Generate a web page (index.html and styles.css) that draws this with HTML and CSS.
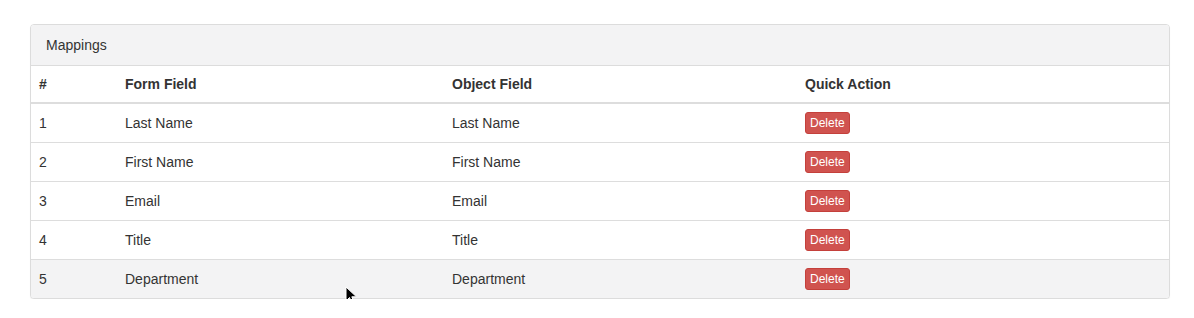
FILE: index.html
```html
<!DOCTYPE html>
<html>
<head>
<meta charset="utf-8">
<link rel="stylesheet" href="styles.css">
</head>
<body>
<div class="page">
  <div class="panel">
    <div class="panel-heading">Mappings</div>
    <table class="table">
      <thead>
        <tr>
          <th class="c1">#</th>
          <th class="c2">Form Field</th>
          <th class="c3">Object Field</th>
          <th class="c4">Quick Action</th>
        </tr>
      </thead>
      <tbody>
        <tr><td>1</td><td>Last Name</td><td>Last Name</td><td class="act"><button class="btn-del">Delete</button></td></tr>
        <tr><td>2</td><td>First Name</td><td>First Name</td><td class="act"><button class="btn-del">Delete</button></td></tr>
        <tr><td>3</td><td>Email</td><td>Email</td><td class="act"><button class="btn-del">Delete</button></td></tr>
        <tr><td>4</td><td>Title</td><td>Title</td><td class="act"><button class="btn-del">Delete</button></td></tr>
        <tr class="hover"><td>5</td><td>Department</td><td>Department</td><td class="act"><button class="btn-del">Delete</button></td></tr>
      </tbody>
    </table>
  </div>
  <svg class="cursor" width="14" height="20" viewBox="0 0 14 20">
    <path d="M1 1 L1 15 L4.5 11.5 L7 17.5 L9.3 16.5 L6.8 10.8 L11.5 10.8 Z" fill="#000" stroke="#fff" stroke-width="1"/>
  </svg>
</div>
</body>
</html>
```
FILE: styles.css
```css
html, body {
  margin: 0;
  padding: 0;
  background: #fff;
}
.page {
  position: relative;
  padding: 24px 0 0 30px;
  font-family: "Liberation Sans", Arial, sans-serif;
  font-size: 14px;
  color: #333;
}
.panel {
  width: 1138px;
  border: 1px solid #dcdcdc;
  border-radius: 4px;
  background: #fff;
  overflow: hidden;
  box-shadow: 0 1px 1px rgba(0,0,0,0.05);
}
.panel-heading {
  background: #f3f3f4;
  padding: 10px 15px;
  line-height: 20px;
  border-bottom: 1px solid #dcdcdc;
}
.table {
  width: 100%;
  border-collapse: collapse;
  border-spacing: 0;
}
.table th, .table td {
  padding: 8px;
  line-height: 20px;
  text-align: left;
  vertical-align: middle;
}
.table th {
  font-weight: bold;
  border-bottom: 2px solid #ddd;
}
.table td {
  border-top: 1px solid #ddd;
}
.table thead + tbody tr:first-child td {
  border-top: 0;
}
.table td.act {
  line-height: 0;
}
.c1 { width: 70px; }
.c2 { width: 311px; }
.c3 { width: 337px; }
.table tr.hover td {
  background: #f3f3f4;
}
.btn-del {
  display: inline-block;
  font-family: "Liberation Sans", Arial, sans-serif;
  font-size: 12px;
  line-height: 18px;
  height: 22px;
  padding: 1px 4px;
  color: #fff;
  background: #d0534f;
  border: 1px solid #c4403b;
  border-radius: 3px;
  margin: 0;
  vertical-align: top;
  box-sizing: border-box;
}
.cursor {
  position: absolute;
  left: 345px;
  top: 286px;
}
```
